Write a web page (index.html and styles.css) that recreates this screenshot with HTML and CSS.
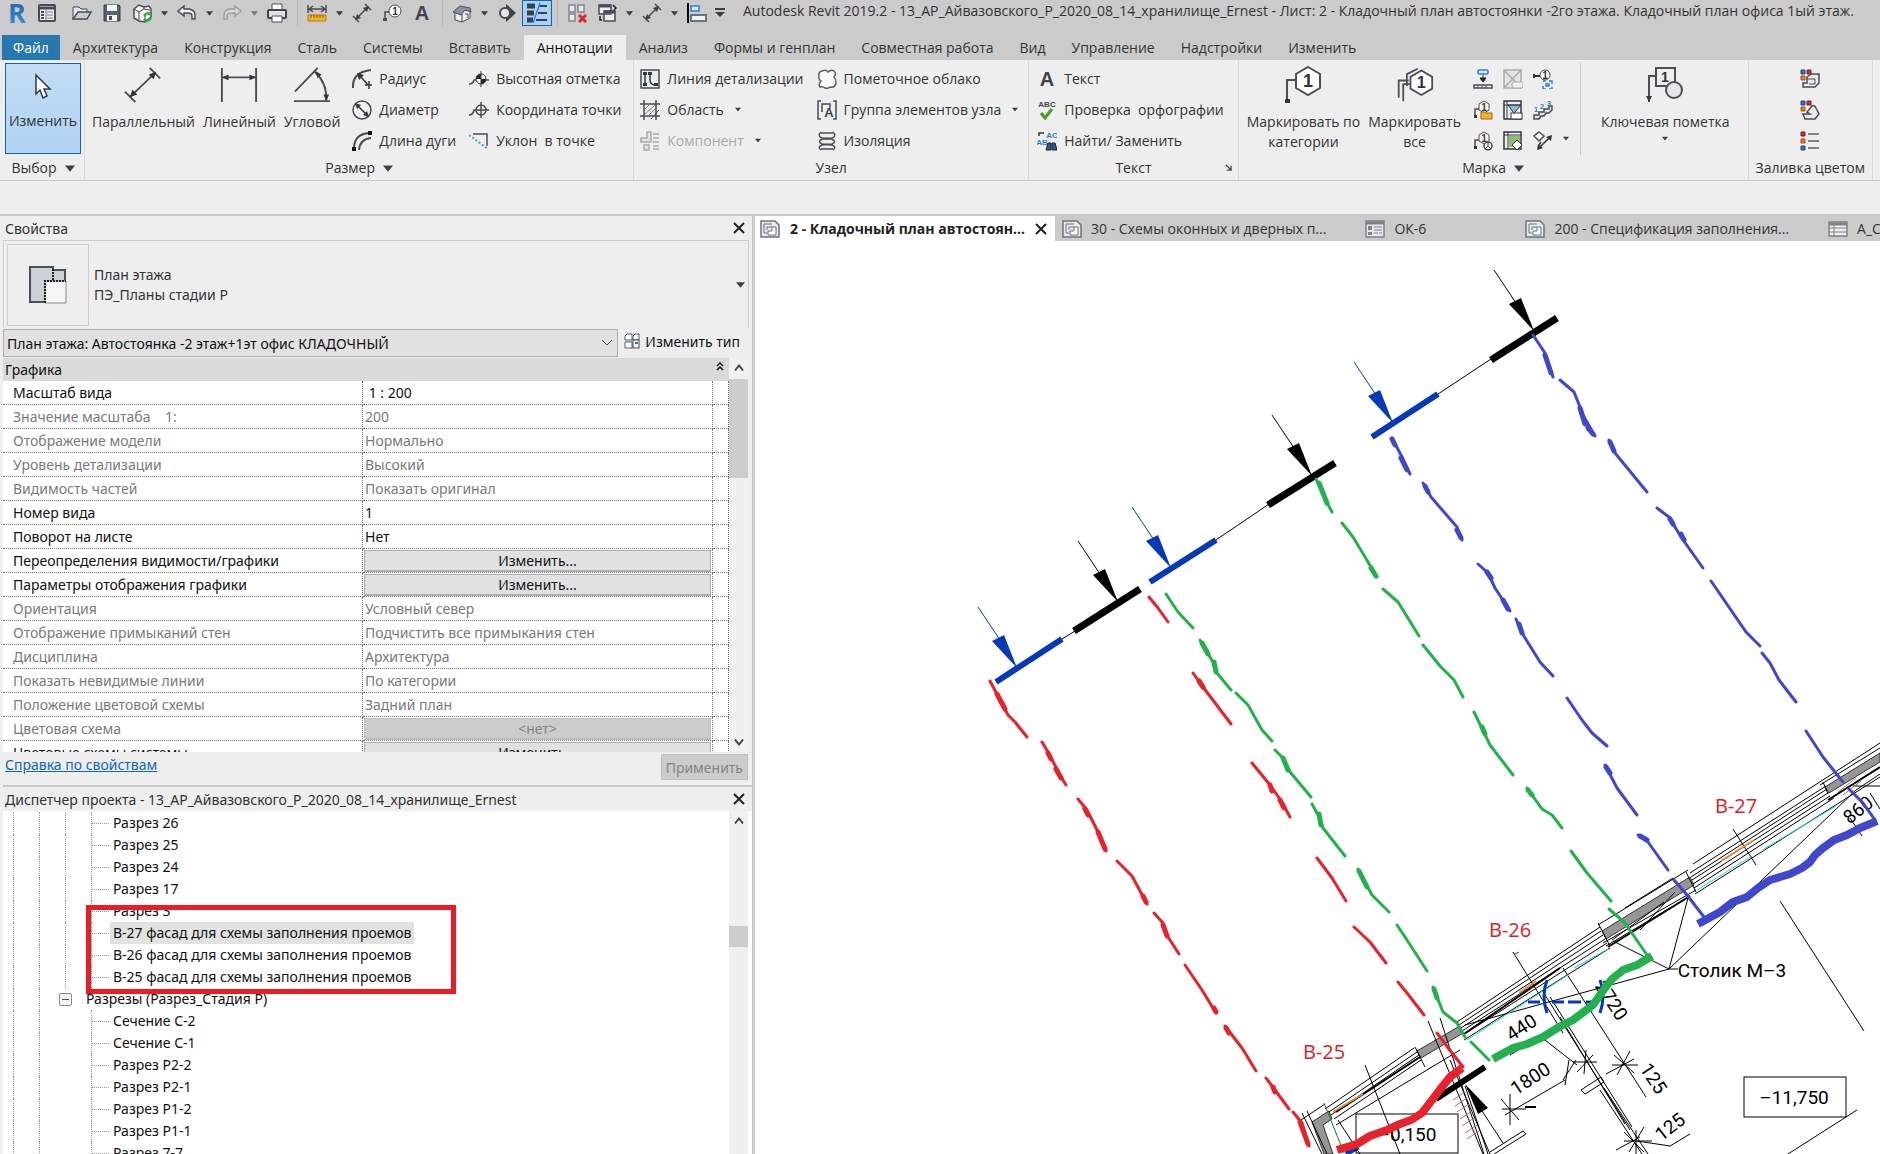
FILE: index.html
```html
<!DOCTYPE html>
<html lang="ru">
<head>
    <meta charset="UTF-8">
    <meta name="viewport" content="width=device-width, initial-scale=1.0">
    <title>Autodesk Revit 2019.2</title>
    <link rel="stylesheet" href="styles.css">
</head>
<body>
    <!-- shared icons -->
    <svg class="sprite" aria-hidden="true">
        <symbol id="i-caret" viewBox="0 0 8 5"><path d="M0 0h8L4 5z" fill="#3c3f45"/></symbol>
        <symbol id="i-close" viewBox="0 0 12 12"><path d="M1 1l10 10M11 1L1 11" stroke="#222" stroke-width="2"/></symbol>
        <symbol id="i-up" viewBox="0 0 10 8"><path d="M1 6.500l4-5 4 5" fill="none" stroke="#444" stroke-width="2"/></symbol>
        <symbol id="i-dblup" viewBox="0 0 8 10"><path d="M1 5l3-3 3 3M1 9l3-3 3 3" fill="none" stroke="#111" stroke-width="1.500"/></symbol>
        <symbol id="i-down" viewBox="0 0 10 8"><path d="M1 1.500l4 5 4-5" fill="none" stroke="#444" stroke-width="2"/></symbol>
        <symbol id="i-window" viewBox="0 0 20 20"><rect x="2" y="2" width="16" height="16" rx="1" fill="#eee" stroke="#474c55" stroke-width="2"/><path d="M2 5h16" stroke="#474c55" stroke-width="3"/><path d="M4 9h3M4 12h3M4 15h3" stroke="#474c55" stroke-width="2"/><path d="M9 7v10M10 9h6M10 12h6M10 15h6" stroke="#777c85"/></symbol>
        <symbol id="i-open" viewBox="0 0 20 20"><path d="M1 16V4h6l2 2h6v3" fill="#e4e6ea" stroke="#474c55"/><path d="M1 16L6 9h13l-4 7z" fill="#c9ced6" stroke="#474c55" stroke-width="1.500"/></symbol>
        <symbol id="i-save" viewBox="0 0 20 20"><path d="M2 2h15l1 1v15H2z" fill="#59606b" stroke="#3a3f48"/><path d="M5 2h10v6H5zM5 12h10v6H5z" fill="#f2f3f5"/><path d="M7 13h3v4H7z" fill="#474c55"/></symbol>
        <symbol id="i-sync" viewBox="0 0 20 20"><path d="M2 6l5-4 5 2 5-1 2 3v8l-6 5-6-1-5-3z" fill="#f4f5f6" stroke="#474c55" stroke-width="1.500"/><path d="M2 6l5 3 5-3 6 1M7 9v8M12 6V3M13 11v6" fill="none" stroke="#474c55"/><path d="M12 13q4-5 7-1M19 15q-4 5-7 1" fill="none" stroke="#1fb13a" stroke-width="2.500"/></symbol>
        <symbol id="i-undo" viewBox="0 0 20 20"><path d="M1 8l6-5v3h5q6 1 6 6v4h-3v-3q0-3-4-3H7v3z" fill="#eee" stroke="#474c55" stroke-width="1.500"/></symbol>
        <symbol id="i-redo" viewBox="0 0 20 20"><path d="M19 8l-6-5v3H8q-6 1-6 6v4h3v-3q0-3 4-3h4v3z" fill="#d8d8d8" stroke="#9c9fa4" stroke-width="1.500"/></symbol>
        <symbol id="i-print" viewBox="0 0 20 20"><path d="M5 1h10v7H5z" fill="#fff" stroke="#474c55"/><rect x="1" y="7" width="18" height="8" rx="1" fill="#dfe2e6" stroke="#3f444d" stroke-width="2"/><path d="M5 13h10v6H5z" fill="#fff" stroke="#474c55"/></symbol>
        <symbol id="i-measure" viewBox="0 0 20 20"><path d="M1 2v8M19 2v8M2 6h16M6 3L2 6l4 3M14 3l4 3-4 3" fill="none" stroke="#474c55" stroke-width="1.500"/><path d="M1 12h18v6H1z" fill="#f2b32c" stroke="#b97a10"/><path d="M4 12v3M7 12v3M10 12v3M13 12v3M16 12v3" stroke="#8a5a08"/></symbol>
        <symbol id="i-dim" viewBox="0 0 20 20"><path d="M4 16L16 4M1 13l6 6M13 1l6 6" stroke="#474c55" stroke-width="1.500"/><path d="M3 17l2-6 4 4zM17 3l-2 6-4-4z" fill="#3c4047"/></symbol>
        <symbol id="i-tag" viewBox="0 0 20 20"><path d="M3 16V9h4" fill="none" stroke="#474c55" stroke-width="1.500"/><path d="M1 15h4v3H1z" fill="#474c55"/><circle cx="13" cy="8" r="6" fill="#fff" stroke="#474c55"/><text x="13" y="12" class="num">1</text></symbol>
        <symbol id="i-letter" viewBox="0 0 20 20"><text x="10" y="17" class="letter">A</text></symbol>
        <symbol id="i-house" viewBox="0 0 20 20"><path d="M3 9v8l7 2 8-4V8" fill="#eceef1" stroke="#474c55"/><path d="M1 9l7-6 10 2 1 4-6-2-4 5z" fill="#8d949f" stroke="#474c55"/><path d="M10 11v8M13 11h3v4" fill="none" stroke="#474c55"/></symbol>
        <symbol id="i-section" viewBox="0 0 20 20"><path d="M9 1l10 9-10 9z" fill="#3c4047"/><circle cx="8" cy="10" r="5" fill="#e9eaec" stroke="#474c55" stroke-width="2"/></symbol>
        <symbol id="i-thin" viewBox="0 0 24 22"><path d="M2 4h8M2 11h7M2 18h6" stroke="#3c4047" stroke-width="5"/><path d="M14 4h8M13 11h9M11 18h11" stroke="#3c4047" stroke-width="2"/><path d="M15 1L8 21" stroke="#2a8ae6" stroke-width="1.500"/></symbol>
        <symbol id="i-closewin" viewBox="0 0 20 20"><path d="M2 2h6v7H2zM11 2h6v7h-6zM2 11h6v7H2z" fill="#e8eaed" stroke="#81868e" stroke-width="1.500"/><path d="M12 12l7 7M19 12l-7 7" stroke="#d92b2b" stroke-width="3"/></symbol>
        <symbol id="i-switch" viewBox="0 0 20 20"><path d="M2 2h12v9H2zM7 8h11v10H7z" fill="#eee" stroke="#474c55" stroke-width="1.500"/><path d="M2 3h12M7 9h11" stroke="#474c55" stroke-width="3"/><path d="M16 2l3 3-2 2M3 13v4h2" fill="none" stroke="#222" stroke-width="1.500"/></symbol>
        <symbol id="i-align" viewBox="0 0 20 20"><path d="M1 0v20" stroke="#000" stroke-width="2"/><path d="M4 3h8v5H4z" fill="#d6ecff" stroke="#2a7fd6" stroke-width="1.500"/><path d="M4 12h15v6H4z" fill="#f2f3f5" stroke="#6d737d" stroke-width="2"/></symbol>
        <symbol id="i-custom" viewBox="0 0 10 10"><path d="M0 1h10" stroke="#3c3f45" stroke-width="2"/><path d="M0 4h10L5 9z" fill="#3c3f45"/></symbol>

        <symbol id="i-cursor" viewBox="0 0 20 28"><path d="M3 2v19l4-4 3 8 4-2-3-7h6z" fill="#fff" stroke="#333841" stroke-width="1.500"/></symbol>
        <symbol id="i-aligned" viewBox="0 0 40 38"><path d="M7 31L33 6M1 26l11 11M27 1l11 11" stroke="#4b4f57" stroke-width="2"/><path d="M6 32l3-8 5 5zM34 5l-3 8-5-5z" fill="#33373e"/></symbol>
        <symbol id="i-linear" viewBox="0 0 40 38"><path d="M2 1v36M38 1v36M3 11h34" stroke="#4b4f57" stroke-width="2"/><path d="M2 11l7-3v6zM38 11l-7-3v6z" fill="#33373e"/></symbol>
        <symbol id="i-angular" viewBox="0 0 40 38"><path d="M2 26L26 1M1 36h38M23 5q13 12 12 30" fill="none" stroke="#4b4f57" stroke-width="2"/><path d="M35 36l-3-7h6zM23 4l7 4-4 4z" fill="#33373e"/></symbol>
        <symbol id="i-radius" viewBox="0 0 20 20"><path d="M1 19Q0 3 19 1" fill="none" stroke="#474c55" stroke-width="2"/><path d="M8 7l9 10M17 12v8M13 16h7" stroke="#33373e" stroke-width="1.500"/><path d="M5 4l7 2-5 5z" fill="#33373e"/></symbol>
        <symbol id="i-diameter" viewBox="0 0 20 20"><circle cx="10" cy="10" r="9" fill="#f1f2f4" stroke="#474c55" stroke-width="1.500"/><path d="M4 4l12 12" stroke="#33373e" stroke-width="1.500"/><path d="M3 3l6 2-4 4zM17 17l-6-2 4-4z" fill="#33373e"/></symbol>
        <symbol id="i-arc" viewBox="0 0 20 20"><path d="M2 16Q3 3 17 2M7 19Q8 8 19 7" fill="none" stroke="#474c55" stroke-width="2"/><path d="M0 16h4v4H0zM16 0h4v4h-4z" fill="#111"/></symbol>
        <symbol id="i-elev" viewBox="0 0 20 20"><path d="M0 15q4 0 5-4h15" fill="none" stroke="#474c55" stroke-width="1.500"/><circle cx="12" cy="10" r="5" fill="#fff" stroke="#33373e"/><path d="M12 5a5 5 0 0 0-5 5h5zM12 15a5 5 0 0 0 5-5h-5z" fill="#222"/><path d="M12 2v16" stroke="#33373e"/></symbol>
        <symbol id="i-coord" viewBox="0 0 20 20"><path d="M0 15q4 0 5-5h15M12 2v16" fill="none" stroke="#474c55" stroke-width="1.500"/><circle cx="12" cy="10" r="5" fill="none" stroke="#474c55" stroke-width="1.500"/></symbol>
        <symbol id="i-slope" viewBox="0 0 20 20"><path d="M4 3h14v12" fill="none" stroke="#474c55" stroke-width="1.500"/><path d="M0 4l19 14" stroke="#4f94dc" stroke-width="2" stroke-dasharray="2 2"/></symbol>
        <symbol id="i-detail" viewBox="0 0 20 20"><rect x="1" y="1" width="18" height="18" fill="#e6e9ee" stroke="#474c55" stroke-width="1.500"/><path d="M5 4v12M10 4v7q0 5 6 5" fill="none" stroke="#33373e" stroke-width="1.500"/><path d="M3 3h4v3H3zM3 14h4v3H3zM8 3h4v3H8zM14 14h4v3h-4z" fill="#33373e"/></symbol>
        <symbol id="i-region" viewBox="0 0 20 20"><path d="M0 4h20M0 16h20M4 0v20M16 0v20" stroke="#474c55" stroke-width="1.500"/><path d="M5 9l4-4M5 14l10-9M9 15l6-6" stroke="#7b8089"/><path d="M19 10l-8 9" stroke="#474c55"/></symbol>
        <symbol id="i-comp" viewBox="0 0 20 20"><path d="M7 1h4v10H1V7h6zM4 14h5v5H4z" fill="#e3e3e3" stroke="#aaa" stroke-width="1.500"/><path d="M13 3h6M13 7h6M13 11h6M13 15h6M13 18h6" stroke="#aaa" stroke-width="1.500"/></symbol>
        <symbol id="i-cloud" viewBox="0 0 20 20"><path d="M5 2Q9 0 11 3q3-3 6-1 3 3 0 6 2 2 2 6-1 5-6 4-2 2-5 1-2-2-5-1-2-2 1-6-3-2-2-5-1-4 3-5z" fill="#f8f8f9" stroke="#5a5f68" stroke-width="1.500"/></symbol>
        <symbol id="i-group" viewBox="0 0 20 20"><path d="M4 1H1v18h3M16 1h3v18h-3M5 12V4h8v4" fill="none" stroke="#474c55" stroke-width="1.500"/><text x="12" y="17" class="letter mid">A</text></symbol>
        <symbol id="i-insul" viewBox="0 0 20 20"><path d="M4 1q-4 4 1 6l10 1q5 3 0 5L5 14q-5 2-1 5M16 1q4 4-1 6L5 8q-5 3 0 5l10 1q5 2 1 5M4 2h12M4 18h12" fill="none" stroke="#474c55" stroke-width="1.500"/></symbol>
        <symbol id="i-spell" viewBox="0 0 20 20"><text x="10" y="7" class="tiny">ABC</text><path d="M4 13l4 5 7-9" fill="none" stroke="#45a21d" stroke-width="3"/></symbol>
        <symbol id="i-find" viewBox="0 0 20 20"><path d="M2 5V2h5" fill="none" stroke="#333" stroke-width="1.500"/><text x="15" y="7" class="tiny blue">AC</text><text x="5" y="14" class="tiny blue">AB</text><path d="M9 19l2-7h3v7zM15 12h3l2 7h-5z" fill="#28598f" stroke="#222"/></symbol>
        <symbol id="i-launch" viewBox="0 0 8 8"><path d="M1 1l5 5M2 7h5V2" fill="none" stroke="#444" stroke-width="1.500"/></symbol>

        <symbol id="i-tagcat" viewBox="0 0 38 38"><path d="M3 36V14h11" fill="none" stroke="#4b4f57" stroke-width="2"/><path d="M1 33h5v4H1z" fill="#33373e"/><path d="M24 1l12 7v14l-12 7-12-7V8z" fill="#fff" stroke="#4b4f57" stroke-width="2"/><text x="24" y="21" class="num big-num">1</text></symbol>
        <symbol id="i-tagall" viewBox="0 0 42 38"><path d="M3 33V14h11M8 37V18h8" fill="none" stroke="#4b4f57" stroke-width="2"/><path d="M12 20V7l12-6" fill="none" stroke="#4b4f57" stroke-width="2"/><path d="M28 3l12 7v13l-12 7-12-7V10z" fill="#fff" stroke="#4b4f57" stroke-width="2"/><text x="28" y="22" class="num big-num">1</text></symbol>
        <symbol id="i-keynote" viewBox="0 0 38 38"><path d="M3 36V10h7M10 2h19v18H10z" fill="none" stroke="#4b4f57" stroke-width="2"/><path d="M0 30h6l-3 6z" fill="#33373e"/><circle cx="28" cy="24" r="8" fill="#e3e7ec" stroke="#4b4f57" stroke-width="2"/><text x="19" y="16" class="num mid-num">1</text></symbol>
        <symbol id="i-m1" viewBox="0 0 20 20"><rect x="5" y="1" width="10" height="4" rx="1" fill="#d6ecff" stroke="#2a7fd6" stroke-width="1.500"/><path d="M10 6v5M7 9l3 4 3-4z" stroke="#222" fill="#222"/><path d="M1 16h18v3H1z" fill="#fff" stroke="#474c55" stroke-width="1.500"/><path d="M5 16v3M9 16v3M13 16v3" stroke="#474c55"/></symbol>
        <symbol id="i-m2" viewBox="0 0 20 20"><path d="M1 1h17v18H1zM1 1l17 18M18 1L1 19" fill="#e4e4e4" stroke="#aaa" stroke-width="1.500"/><rect x="9" y="13" width="11" height="6" rx="2" fill="#eee" stroke="#aaa"/></symbol>
        <symbol id="i-m3" viewBox="0 0 20 20"><path d="M1 7h6M1 5v4" stroke="#333" stroke-width="2"/><circle cx="12" cy="6" r="5" fill="#fff" stroke="#474c55"/><text x="12" y="10" class="num">1</text><path d="M10 12h3M16 12h3v3M19 18v2h-3M13 20h-3v-3M13 15h3v2h-3z" fill="none" stroke="#2a7fd6" stroke-width="1.500"/></symbol>
        <symbol id="i-m4" viewBox="0 0 20 20"><path d="M2 16V9h4" fill="none" stroke="#474c55" stroke-width="1.500"/><path d="M1 15h3v3H1z" fill="#333"/><path d="M11 1l5 3v6l-5 3-5-3V4z" fill="#fff" stroke="#474c55"/><text x="11" y="11" class="num">1</text><path d="M8 12h4l1 1h6v6H8z" fill="#f2b32c" stroke="#9c6508"/></symbol>
        <symbol id="i-m5" viewBox="0 0 20 20"><rect x="1" y="1" width="17" height="18" fill="#eef1f4" stroke="#33373e" stroke-width="1.500"/><path d="M5 5h13l-7 8z" fill="#7fc0d8" stroke="#33373e"/><path d="M4 1v18M1 5h17" stroke="#33373e"/><rect x="8" y="13" width="11" height="6" fill="#fff" stroke="#33373e"/></symbol>
        <symbol id="i-m6" viewBox="0 0 20 20"><path d="M1 19v-4h5v-3h5V9h5V6h3v4l-3 3h-3l-2 3H8l-2 3z" fill="#dfe2e6" stroke="#474c55" stroke-width="1.500"/><text x="3" y="12" class="tiny blue">1</text><text x="9" y="9" class="tiny blue">2</text><text x="16" y="6" class="tiny blue">3</text></symbol>
        <symbol id="i-m7" viewBox="0 0 20 20"><path d="M2 16V9h4" fill="none" stroke="#474c55" stroke-width="1.500"/><path d="M1 15h3v3H1z" fill="#333"/><path d="M11 1l5 3v6l-5 3-5-3V4z" fill="#fff" stroke="#474c55"/><text x="11" y="11" class="num">1</text><circle cx="15" cy="15" r="4" fill="#eee" stroke="#474c55" stroke-width="1.500"/><path d="M15 15v-4M15 15l3 3M15 15l-3 3" stroke="#474c55"/></symbol>
        <symbol id="i-m8" viewBox="0 0 20 20"><rect x="1" y="1" width="17" height="17" fill="#eef1f4" stroke="#33373e" stroke-width="1.500"/><path d="M6 5h11v11H6z" fill="#8dbd6b"/><path d="M5 1v17M1 4h17" stroke="#33373e"/><path d="M14 9l5 5-5 5-5-5z" fill="#fff" stroke="#33373e"/></symbol>
        <symbol id="i-m9" viewBox="0 0 20 20"><path d="M6 1l5 4-5 5-5-5z" fill="#fff" stroke="#474c55" stroke-width="1.500"/><path d="M5 18L18 5M8 11l-2 3" stroke="#33373e" stroke-width="1.500"/><path d="M4 19l1-6 5 4zM19 4l-1 6-5-4z" fill="#33373e"/></symbol>
        <g id="i-squares"><path d="M1 1h4v4H1z" fill="#2873c4" stroke="#1b4f8c"/><path d="M7 1h4v4H7z" fill="#c4283a" stroke="#8c1b28"/><path d="M1 7h4v4H1z" fill="#ef7d10" stroke="#a85205"/></g>
        <symbol id="i-c1" viewBox="0 0 20 20"><path d="M7 8l4-3h8v9l-4 4H3v-4h4z" fill="#e8eaed" stroke="#474c55" stroke-width="1.500"/><path d="M7 10h8v5H9" fill="none" stroke="#474c55"/><use href="#i-squares"/></symbol>
        <symbol id="i-c2" viewBox="0 0 20 20"><path d="M3 14h7l-3-2 5-6q3-1 4 2l3 6-4 5H5z" fill="#e8eaed" stroke="#474c55" stroke-width="1.500"/><use href="#i-squares"/></symbol>
        <symbol id="i-c3" viewBox="0 0 20 20"><path d="M1 1h4v4H1z" fill="#c4283a" stroke="#8c1b28"/><path d="M1 8h4v4H1z" fill="#ef7d10" stroke="#a85205"/><path d="M1 15h4v4H1z" fill="#2873c4" stroke="#1b4f8c"/><path d="M8 3h11M8 10h11M8 17h11" stroke="#5a5f68" stroke-width="1.500"/></symbol>

        <symbol id="i-plan" viewBox="0 0 40 40"><path d="M2 2h23v3h12v16H20v16H2z" fill="#ccd1d9" stroke="#4b4f57" stroke-width="2"/><path d="M17 16h21v22H17z" fill="#f6f7f8" stroke="#888"/><path d="M25 4v12M17 38V16h21" fill="none" stroke="#222" stroke-width="2" stroke-dasharray="2 1"/></symbol>
        <symbol id="i-type" viewBox="0 0 16 16"><path d="M1 3l2-2h5v6H1zM9 3l2-2h4v6H9zM1 9h7v6H1z" fill="#fff" stroke="#4a5a6c"/><rect x="9" y="7" width="6" height="8" fill="#fff" stroke="#3a4552"/><path d="M11 9h3v2h-3z" fill="#2873c4"/></symbol>
        <symbol id="i-sheet" viewBox="0 0 20 18"><path d="M1 1h14l4 4v12H1z" fill="#e6e9ec" stroke="#6d737d" stroke-width="1.500"/><path d="M4 4h8M4 4v9h3M7 7h5M7 7v3" fill="none" stroke="#6d737d"/><path d="M12 7h4v8H8v-4h4z" fill="#fff" stroke="#6d737d"/></symbol>
        <symbol id="i-legend" viewBox="0 0 20 18"><rect x="1" y="1" width="18" height="16" fill="#e6e8ea" stroke="#7d828a" stroke-width="1.500"/><path d="M1 3h18" stroke="#7d828a" stroke-width="3"/><path d="M3 6h4v4H3zM3 12h4v3H3z" fill="#7d828a"/><path d="M9 7h8M9 10h8M9 13h4M14 13h3" stroke="#7d828a"/></symbol>
        <symbol id="i-sched" viewBox="0 0 20 18"><rect x="1" y="2" width="18" height="14" fill="#eceef0" stroke="#7d828a" stroke-width="1.500"/><path d="M1 4h18" stroke="#7d828a" stroke-width="3"/><path d="M1 8h18M1 12h18M6 4v12" stroke="#7d828a"/></symbol>
    </svg>

    <header class="titlebar">
        <div class="quick">
            <button class="q logo-btn" aria-label="Revit">
                <svg viewBox="0 0 24 26">
                    <linearGradient id="logo" x1="0" y1="0" x2="0" y2="1">
                        <stop offset="0" stop-color="#1858a8"/><stop offset="1" stop-color="#3a9bd0"/>
                    </linearGradient>
                    <text x="12" y="23" class="logo">R</text>
                </svg>
            </button>
            <button class="q" aria-label="Главная"><svg><use href="#i-window"/></svg></button>
            <button class="q after-logo" aria-label="Открыть"><svg><use href="#i-open"/></svg></button>
            <button class="q" aria-label="Сохранить"><svg><use href="#i-save"/></svg></button>
            <button class="q" aria-label="Синхронизация"><svg><use href="#i-sync"/></svg></button>
            <button class="q more" aria-label="Еще"><svg><use href="#i-caret"/></svg></button>
            <button class="q" aria-label="Отменить"><svg><use href="#i-undo"/></svg></button>
            <button class="q more" aria-label="Еще"><svg><use href="#i-caret"/></svg></button>
            <button class="q" aria-label="Повторить"><svg><use href="#i-redo"/></svg></button>
            <button class="q more faded" aria-label="Еще"><svg><use href="#i-caret"/></svg></button>
            <button class="q" aria-label="Печать"><svg><use href="#i-print"/></svg></button>
            <span class="sep"></span>
            <button class="q" aria-label="Измерить"><svg><use href="#i-measure"/></svg></button>
            <button class="q more" aria-label="Еще"><svg><use href="#i-caret"/></svg></button>
            <button class="q" aria-label="Параллельный размер"><svg><use href="#i-dim"/></svg></button>
            <button class="q" aria-label="Марка"><svg><use href="#i-tag"/></svg></button>
            <button class="q" aria-label="Текст"><svg><use href="#i-letter"/></svg></button>
            <span class="sep"></span>
            <button class="q" aria-label="3D вид"><svg><use href="#i-house"/></svg></button>
            <button class="q more" aria-label="Еще"><svg><use href="#i-caret"/></svg></button>
            <button class="q" aria-label="Разрез"><svg><use href="#i-section"/></svg></button>
            <button class="q on" aria-label="Тонкие линии"><svg><use href="#i-thin"/></svg></button>
            <span class="sep"></span>
            <button class="q" aria-label="Закрыть неактивные"><svg><use href="#i-closewin"/></svg></button>
            <button class="q" aria-label="Переключить окна"><svg><use href="#i-switch"/></svg></button>
            <button class="q more" aria-label="Еще"><svg><use href="#i-caret"/></svg></button>
            <button class="q" aria-label="Размер"><svg><use href="#i-dim"/></svg></button>
            <button class="q more" aria-label="Еще"><svg><use href="#i-caret"/></svg></button>
            <button class="q" aria-label="Выровнять"><svg><use href="#i-align"/></svg></button>
            <button class="q more custom" aria-label="Настройка панели"><svg><use href="#i-custom"/></svg></button>
        </div>
        <div class="title">Autodesk Revit 2019.2 - 13_АР_Айвазовского_Р_2020_08_14_хранилище_Ernest - Лист: 2 - Кладочный план автостоянки -2го этажа. Кладочный план офиса 1ый этаж.</div>
    </header>

    <nav class="tabs">
        <button class="tab file">Файл</button>
        <button class="tab">Архитектура</button>
        <button class="tab">Конструкция</button>
        <button class="tab">Сталь</button>
        <button class="tab">Системы</button>
        <button class="tab">Вставить</button>
        <button class="tab current">Аннотации</button>
        <button class="tab">Анализ</button>
        <button class="tab">Формы и генплан</button>
        <button class="tab">Совместная работа</button>
        <button class="tab">Вид</button>
        <button class="tab">Управление</button>
        <button class="tab">Надстройки</button>
        <button class="tab">Изменить</button>
    </nav>

    <div class="ribbon">
        <section class="panel p-select">
            <div class="tools">
                <button class="big on"><svg class="ico-cursor"><use href="#i-cursor"/></svg><span>Изменить</span></button>
            </div>
            <h2>Выбор <svg class="down"><use href="#i-caret"/></svg></h2>
        </section>
        <section class="panel p-dim">
            <div class="tools">
                <button class="big"><svg><use href="#i-aligned"/></svg><span>Параллельный</span></button>
                <button class="big"><svg><use href="#i-linear"/></svg><span>Линейный</span></button>
                <button class="big"><svg><use href="#i-angular"/></svg><span>Угловой</span></button>
                <div class="col">
                    <button class="small"><svg><use href="#i-radius"/></svg>Радиус</button>
                    <button class="small"><svg><use href="#i-diameter"/></svg>Диаметр</button>
                    <button class="small"><svg><use href="#i-arc"/></svg>Длина дуги</button>
                </div>
                <div class="col">
                    <button class="small"><svg><use href="#i-elev"/></svg>Высотная отметка</button>
                    <button class="small"><svg><use href="#i-coord"/></svg>Координата точки</button>
                    <button class="small"><svg><use href="#i-slope"/></svg>Уклон&nbsp; в точке</button>
                </div>
            </div>
            <h2>Размер <svg class="down"><use href="#i-caret"/></svg></h2>
        </section>
        <section class="panel p-detail">
            <div class="tools">
                <div class="col">
                    <button class="small"><svg><use href="#i-detail"/></svg>Линия детализации</button>
                    <button class="small"><svg><use href="#i-region"/></svg>Область <svg class="drop"><use href="#i-caret"/></svg></button>
                    <button class="small off"><svg><use href="#i-comp"/></svg>Компонент <svg class="drop"><use href="#i-caret"/></svg></button>
                </div>
                <div class="col">
                    <button class="small"><svg><use href="#i-cloud"/></svg>Пометочное облако</button>
                    <button class="small"><svg><use href="#i-group"/></svg>Группа элементов узла <svg class="drop"><use href="#i-caret"/></svg></button>
                    <button class="small"><svg><use href="#i-insul"/></svg>Изоляция</button>
                </div>
            </div>
            <h2>Узел</h2>
        </section>
        <section class="panel p-text">
            <div class="tools">
                <div class="col">
                    <button class="small"><svg><use href="#i-letter"/></svg>Текст</button>
                    <button class="small"><svg><use href="#i-spell"/></svg>Проверка&nbsp; орфографии</button>
                    <button class="small"><svg><use href="#i-find"/></svg>Найти/ Заменить</button>
                </div>
            </div>
            <h2>Текст<svg class="launch"><use href="#i-launch"/></svg></h2>
        </section>
        <section class="panel p-tag">
            <div class="tools">
                <button class="big"><svg><use href="#i-tagcat"/></svg><span>Маркировать по<br>категории</span></button>
                <button class="big"><svg><use href="#i-tagall"/></svg><span>Маркировать<br>все</span></button>
                <div class="icons">
                    <button class="mini" aria-label="Марка балок"><svg><use href="#i-m1"/></svg></button>
                    <button class="mini" aria-label="Помещение" disabled><svg><use href="#i-m2"/></svg></button>
                    <button class="mini" aria-label="Несколько категорий"><svg><use href="#i-m3"/></svg></button>
                    <button class="mini" aria-label="Марка материала"><svg><use href="#i-m4"/></svg></button>
                    <button class="mini" aria-label="Марка пространства"><svg><use href="#i-m5"/></svg></button>
                    <button class="mini" aria-label="Номер проступи"><svg><use href="#i-m6"/></svg></button>
                    <button class="mini" aria-label="Марка зоны"><svg><use href="#i-m7"/></svg></button>
                    <button class="mini" aria-label="Марка области"><svg><use href="#i-m8"/></svg></button>
                    <button class="mini" aria-label="Армирование"><svg><use href="#i-m9"/></svg></button>
                </div>
                <svg class="drop low"><use href="#i-caret"/></svg>
                <span class="rule"></span>
                <button class="big key"><svg><use href="#i-keynote"/></svg><span>Ключевая пометка</span><svg class="drop"><use href="#i-caret"/></svg></button>
            </div>
            <h2>Марка <svg class="down"><use href="#i-caret"/></svg></h2>
        </section>
        <section class="panel p-fill">
            <div class="tools">
                <div class="col">
                    <button class="small" aria-label="Воздуховоды"><svg><use href="#i-c1"/></svg></button>
                    <button class="small" aria-label="Трубы"><svg><use href="#i-c2"/></svg></button>
                    <button class="small" aria-label="Легенда"><svg><use href="#i-c3"/></svg></button>
                </div>
            </div>
            <h2>Заливка цветом</h2>
        </section>
    </div>
    <div class="options"></div>

    <main class="work">
        <aside class="side">
            <section class="props">
                <div class="bar-head"><h3>Свойства</h3><button aria-label="Закрыть"><svg><use href="#i-close"/></svg></button></div>
                <div class="family">
                    <div class="thumb"><svg><use href="#i-plan"/></svg></div>
                    <p>План этажа<br>ПЭ_Планы стадии Р</p>
                    <svg class="drop"><use href="#i-caret"/></svg>
                </div>
                <div class="instance">
                    <select aria-label="Вид"><option>План этажа: Автостоянка -2 этаж+1эт офис КЛАДОЧНЫЙ</option></select>
                    <button class="edit-type"><svg><use href="#i-type"/></svg>Изменить тип</button>
                </div>
                <div class="grid-wrap">
                    <div class="grid">
                        <div class="group">Графика <svg><use href="#i-dblup"/></svg></div>
                        <table>
                            <tr><td>Масштаб вида</td><td>&nbsp;1 : 200</td><td></td></tr>
                            <tr class="ro"><td>Значение масштаба&nbsp;&nbsp;&nbsp; 1:</td><td>200</td><td></td></tr>
                            <tr class="ro"><td>Отображение модели</td><td>Нормально</td><td></td></tr>
                            <tr class="ro"><td>Уровень детализации</td><td>Высокий</td><td></td></tr>
                            <tr class="ro"><td>Видимость частей</td><td>Показать оригинал</td><td></td></tr>
                            <tr><td>Номер вида</td><td>1</td><td></td></tr>
                            <tr><td>Поворот на листе</td><td>Нет</td><td></td></tr>
                            <tr><td>Переопределения видимости/графики</td><td class="cell-btn"><button>Изменить...</button></td><td></td></tr>
                            <tr><td>Параметры отображения графики</td><td class="cell-btn"><button>Изменить...</button></td><td></td></tr>
                            <tr class="ro"><td>Ориентация</td><td>Условный север</td><td></td></tr>
                            <tr class="ro"><td>Отображение примыканий стен</td><td>Подчистить все примыкания стен</td><td></td></tr>
                            <tr class="ro"><td>Дисциплина</td><td>Архитектура</td><td></td></tr>
                            <tr class="ro"><td>Показать невидимые линии</td><td>По категории</td><td></td></tr>
                            <tr class="ro"><td>Положение цветовой схемы</td><td>Задний план</td><td></td></tr>
                            <tr class="ro"><td>Цветовая схема</td><td class="cell-btn"><button disabled>&lt;нет&gt;</button></td><td></td></tr>
                            <tr><td>Цветовые схемы системы</td><td class="cell-btn"><button>Изменить...</button></td><td></td></tr>
                        </table>
                    </div>
                    <div class="scroll props-scroll"><svg><use href="#i-up"/></svg><span class="knob"></span><svg class="end"><use href="#i-down"/></svg></div>
                </div>
                <div class="foot"><a href="#help">Справка по свойствам</a><button disabled>Применить</button></div>
            </section>

            <section class="browser">
                <div class="bar-head"><h3>Диспетчер проекта - 13_АР_Айвазовского_Р_2020_08_14_хранилище_Ernest</h3><button aria-label="Закрыть"><svg><use href="#i-close"/></svg></button></div>
                <div class="tree-wrap">
                    <ul class="tree">
                        <li><i></i><i></i><i></i><i class="leaf"></i><span>Разрез 26</span></li>
                        <li><i></i><i></i><i></i><i class="leaf"></i><span>Разрез 25</span></li>
                        <li><i></i><i></i><i></i><i class="leaf"></i><span>Разрез 24</span></li>
                        <li><i></i><i></i><i></i><i class="leaf"></i><span>Разрез 17</span></li>
                        <li><i></i><i></i><i></i><i class="leaf"></i><span>Разрез 3</span></li>
                        <li><i></i><i></i><i></i><i class="leaf"></i><span class="sel">В-27 фасад для схемы заполнения проемов</span></li>
                        <li><i></i><i></i><i></i><i class="leaf"></i><span>В-26 фасад для схемы заполнения проемов</span></li>
                        <li><i></i><i></i><i></i><i class="leaf"></i><span>В-25 фасад для схемы заполнения проемов</span></li>
                        <li><i></i><i></i><b></b><span>Разрезы (Разрез_Стадия Р)</span></li>
                        <li><i></i><i></i><i class="none"></i><i class="leaf"></i><span>Сечение С-2</span></li>
                        <li><i></i><i></i><i class="none"></i><i class="leaf"></i><span>Сечение С-1</span></li>
                        <li><i></i><i></i><i class="none"></i><i class="leaf"></i><span>Разрез Р2-2</span></li>
                        <li><i></i><i></i><i class="none"></i><i class="leaf"></i><span>Разрез Р2-1</span></li>
                        <li><i></i><i></i><i class="none"></i><i class="leaf"></i><span>Разрез Р1-2</span></li>
                        <li><i></i><i></i><i class="none"></i><i class="leaf"></i><span>Разрез Р1-1</span></li>
                        <li><i></i><i></i><i class="none"></i><i class="leaf"></i><span>Разрез 7-7</span></li>
                    </ul>
                    <div class="scroll tree-scroll"><svg><use href="#i-up"/></svg><span class="knob"></span></div>
                    <div class="marker"></div>
                </div>
            </section>
        </aside>

        <section class="view">
            <div class="docs">
                <button class="doc current"><svg><use href="#i-sheet"/></svg><span>2 - Кладочный план автостоян...</span><svg class="x"><use href="#i-close"/></svg></button>
                <button class="doc"><svg><use href="#i-sheet"/></svg><span>30 - Схемы оконных и дверных п...</span></button>
                <button class="doc"><svg><use href="#i-legend"/></svg><span>ОК-6</span></button>
                <button class="doc"><svg><use href="#i-sheet"/></svg><span>200 - Спецификация заполнения...</span></button>
                <button class="doc"><svg><use href="#i-sched"/></svg><span>А_С</span></button>
            </div>
            <svg class="canvas" viewBox="755 241 1125 913" preserveAspectRatio="xMinYMin slice">
                <!-- section marks -->
                <g class="thin">
                    <path d="M1062 639l13-8M1216 540l53-36M1438 394l53-35"/>
                </g>
                <g class="mark-blue">
                    <path class="bar" d="M996 682l66-43M1150 582l66-42M1372 437l66-43"/>
                    <path class="thin" d="M978 607l26 39M1132 507l26 39M1354 362l26 39"/>
                    <path class="tip" d="M992 641l12-6 13 33zM1146 541l12-6 13 33zM1368 396l12-6 13 33z"/>
                </g>
                <g class="mark-black">
                    <path class="bar" d="M1074 631l66-42M1268 505l67-42M1491 360l66-42"/>
                    <path class="thin" d="M1078 541l26 39M1272 415l26 39M1494 270l26 39"/>
                    <path class="tip" d="M1093 575l12-6 13 33zM1287 449l12-6 13 33zM1509 304l12-6 13 33z"/>
                </g>

                <!-- walls -->
                <g class="wall">
                    <path d="M1417 1051l41-24 5 6-42 25zM1602 931l88-54 4 8-88 54zM1825 787l55-34v9l-51 31zM1312 1122l17-11 3 8-9 6 10 29h-9z"/>
                </g>
                <g class="thin">
                    <path d="M1329 1112L1417 1052M1331 1115L1419 1055M1334 1119L1421 1060M1325 1109L1414 1048M1336 1125L1460 1050"/>
                    <path d="M1457 1022L1600 927M1459 1025L1601 931M1461 1028L1603 935M1462 1031L1605 939M1463 1035L1607 943M1464 1040L1610 948"/>
                    <path d="M1690 873L1826 786M1691 877L1827 789M1692 880L1828 793M1693 884L1830 796M1694 888L1834 798M1695 894L1880 777M1693 864L1880 743M1820 785L1880 748"/>
                    <path d="M1598 925L1688 870M1603 943L1696 890M1625 908L1673 878M1606 946L1690 896M1640 930l35-38M1612 940l52-38"/>
                    <path d="M1598 923l12 23M1686 872l10 20M1823 782l5 12M1415 1047l10 20M1302 1113l20 41M1307 1111l20 43M1338 1120l22 34M1301 1120l24-16"/>
                    <path d="M1365 1065l35 89M1513 952l50 81M1563 968l83 129M1733 829l23 36M1780 901l84 130M1788 1154l69-44"/>
                    <path d="M1669 969l-56-28M1669 969l19-71M1669 969L1856 790M1669 969l-204 56M1669 969h9M1853 786h27M1856 790l24-16"/>
                    <path d="M1545 995l85 135M1550 997l82 130M1560 1017l65 107M1600 1090l42 64M1604 1088l44 66"/>
                    <path d="M1581 1090l20-13 3 5-19 12zM1505 1115l60-35M1606 1074l28-15M1501 1099l18 21M1510 1094v31M1502 1109h24"/>
                    <path d="M1563 1080l13-20M1569 1060l-4 25M1573 1062h24M1577 1072l16-17M1586 1050l-2 24M1612 1065h26M1617 1075l13-24M1614 1055l20 18"/>
                    <path d="M1624 1141h28M1629 1152l15-25M1624 1132l20 20M1636 1130v24M1637 1141l33 5 20-12M1616 1150l24-13"/>
                    <path d="M1428 1021l55 133M1440 1018l44 136M1450 1060l40 94M1465 1086l23 68M1467 1088l36 55M1490 1152l33-21 3 3-32 20"/>
                    <path d="M1541 1037l36 28M1510 1055l18-11M1850 818l12 18M1870 793l10 16"/>
                </g>
                <path class="heavy" d="M1464 1034L1560 968M1608 947L1690 896M1828 800L1880 767M1336 1112L1420 1057"/>
                <path class="cyan" d="M1467 1040L1568 975M1574 968L1608 949M1697 890L1752 856M1764 849L1836 806"/>
                <path class="orange" d="M1519 993l17-12M1721 861l33-21M1333 1112l30-18"/>
                <path class="hatch" d="M1453 1100l12-8M1455 1106l12-8M1457 1112l12-8M1460 1119l12-8M1462 1126l12-8M1465 1133l12-8M1467 1139l12-8M1838 792l18-14M1843 795l18-14"/>
                <path class="green-thin" d="M1324 1103l20 50M1515 954l4-2"/>
                <g class="dash-blue">
                    <path d="M1528 1002h12M1552 1002h12M1568 1002h13M1586 1002h12"/>
                    <path d="M1547 980q-6 16 0 33M1600 980q6 16 0 33"/>
                </g>
                <path class="black-bar" d="M1436 1099l49-32"/>
                <path class="heavy" d="M1525 1107h11"/>
                <path d="M1465 1084l23 24-10 6z"/>
                <path class="corner-blue" d="M1346 1154l12-7"/>

                <!-- plan labels -->
                <rect class="box" x="1356" y="1114" width="102" height="39"/>
                <rect class="box" x="1744" y="1077" width="102" height="40"/>
                <g class="gost">
                    <text x="1407" y="1141">–0,150</text>
                    <text x="1794" y="1104">–11,750</text>
                    <text x="1732" y="977">Столик М–3</text>
                    <text transform="translate(1525 1033) rotate(-33)">440</text>
                    <text transform="translate(1534 1084) rotate(-33)">1800</text>
                    <text transform="translate(1606 1004) rotate(57)">2720</text>
                    <text transform="translate(1648 1082) rotate(57)">125</text>
                    <text transform="translate(1674 1132) rotate(-38)">125</text>
                    <text transform="translate(1862 815) rotate(-38)">860</text>
                </g>
                <g class="names">
                    <text x="1324" y="1059">В-25</text>
                    <text x="1510" y="937">В-26</text>
                    <text x="1736" y="813">В-27</text>
                </g>

                <!-- hand drawn view lines -->
                <g class="pen red">
                    <path d="M990 681L1001 702 1008 715 1015 722 1027 737M1042 742L1048 752 1060 775 1066 785M1078 799L1087 810 1098 832 1106 851M1117 861L1132 876 1147 904M1154 913L1163 923 1168 937 1179 954M1185 965L1202 990 1216 1013M1225 1026L1242 1048 1256 1071M1266 1078L1275 1090 1289 1109M1293 1112L1302 1123 1309 1146"/>
                    <path d="M1149 597L1158 608 1168 622M1193 673L1203 687 1231 724M1252 763L1270 785 1282 802 1290 817M1317 858L1332 878 1346 901M1354 927L1370 942 1386 963M1398 982L1407 993 1424 1015M1437 1033L1449 1049 1463 1067"/>
                    <path class="wide" d="M997 694l8 15M1048 753l3 6M1056 769l5 9M1085 809l3 6M1098 832l7 17M1143 896l3 6M1163 925l4 11M1214 1008l2 4M1226 1028l3 5M1273 1087l2 5M1300 1122l8 22M1199 681l4 6M1270 785l2 6M1280 800l4 8"/>
                </g>
                <g class="pen green">
                    <path d="M1166 594L1178 612 1193 628M1200 640L1213 662 1217 673 1231 690M1236 693L1248 705 1262 730 1272 741M1275 750L1283 758 1290 772 1311 797M1312 804L1318 815 1323 828 1345 856M1358 869L1372 895 1389 912M1397 925L1407 940 1427 971M1433 987L1443 1012 1457 1023 1465 1037M1471 1042L1489 1060"/>
                    <path d="M1316 479L1323 495 1332 512M1342 523L1353 537 1377 577M1383 589L1398 602 1419 636M1423 645L1440 666 1454 680 1463 697M1474 712L1490 745 1513 775M1527 788L1542 809 1552 815 1562 828M1571 851L1587 873 1611 901M1609 909L1625 923 1647 955"/>
                    <path class="wide" d="M1202 643l6 11M1214 662l2 10M1283 758l5 12M1319 814l2 11M1359 871l8 16M1319 483l8 20M1371 568l5 8M1434 989l3 9M1482 727l3 7M1528 790l4 5"/>
                </g>
                <g class="pen violet">
                    <path d="M1392 438L1402 457 1410 474M1423 483L1431 497 1457 527 1462 540M1478 564L1488 573 1495 588 1510 611M1516 619L1522 633 1540 662 1553 676M1567 698L1582 720 1592 733 1607 746M1605 765L1617 788 1637 815M1638 835L1648 842 1668 870M1674 880L1687 895 1704 917"/>
                    <path d="M1533 335L1545 353 1553 377M1560 380L1574 392 1584 417 1595 436M1609 440L1615 453 1647 492M1657 508L1669 517 1681 537 1703 568M1711 581L1733 613 1746 632 1760 646M1762 653L1770 663 1779 680 1796 702M1806 731L1823 757 1843 782M1849 789L1863 803 1875 820"/>
                    <path class="wide" d="M1392 439l3 6M1401 458l6 12M1457 530l4 8M1425 486l3 6M1487 572l4 6M1503 600l5 9M1519 624l3 9M1606 767l4 6M1640 836l7 4M1545 355l6 18M1580 408l5 16M1588 428l5 6M1610 442l4 9M1670 519l3 5M1681 534l3 6"/>
                </g>
                <path class="brush green" d="M1493 1059L1513 1048 1527 1044 1543 1037 1559 1027 1573 1020 1593 1005 1605 988 1612 979 1623 970 1637 965 1652 956"/>
                <path class="brush violet" d="M1698 924L1720 912 1733 902 1747 897 1758 888 1770 880 1790 874 1802 868 1810 862 1815 855 1823 848 1834 840 1847 835 1860 828 1877 821"/>
                <path class="brush red" d="M1462 1068L1450 1077 1442 1087 1432 1100 1422 1113 1411 1120 1400 1124 1387 1130 1370 1136 1357 1144 1337 1150"/>
            </svg>
        </section>
    </main>
</body>
</html>
```

FILE: styles.css
```css
* {
    box-sizing: border-box;
}

body {
    margin: 0;
    height: 100vh;
    display: flex;
    flex-direction: column;
    overflow: hidden;
    background: #eeeeee;
    color: #333333;
    font-family: "Open Sans", "Noto Sans", sans-serif;
    font-size: 14px;
}

button {
    margin: 0;
    padding: 0;
    border: none;
    background: none;
    color: inherit;
    font: inherit;
    white-space: nowrap;
}

h2, h3, p, ul {
    margin: 0;
    padding: 0;
    font-size: 14px;
    font-weight: normal;
}

svg {
    flex: none;
}

.sprite {
    display: none;
}

/* text inside icons */
.logo {
    font: bold 27px "Open Sans", sans-serif;
    text-anchor: middle;
    fill: url(#logo);
}

.letter {
    font: bold 20px "Liberation Sans", sans-serif;
    text-anchor: middle;
    fill: #3f434b;
}

.letter.mid {
    font-size: 13px;
}

.num {
    font: bold 10px "Liberation Sans", sans-serif;
    text-anchor: middle;
    fill: #333;
}

.mid-num {
    font-size: 14px;
}

.big-num {
    font-size: 18px;
}

.tiny {
    font: bold 8px "Liberation Sans", sans-serif;
    text-anchor: middle;
    fill: #444;
}

.tiny.blue {
    fill: #2a7fd6;
}

/* title bar */
.titlebar {
    display: flex;
    height: 35px;
    background: #cbcbcb;
}

.quick {
    display: flex;
    flex: none;
    height: 26px;
    align-items: center;
    margin-right: 16px;
}

.q {
    display: flex;
    align-items: center;
    justify-content: center;
    width: 30px;
    height: 26px;
}

.q svg {
    width: 20px;
    height: 20px;
}

.logo-btn {
    margin-left: 2px;
}

.logo-btn svg {
    width: 24px;
    height: 26px;
}

.after-logo {
    margin-left: 5px;
}

.q.more {
    width: 15px;
}

.q.more svg {
    width: 7px;
    height: 5px;
}

.q.custom svg {
    width: 10px;
    height: 10px;
}

.q.faded {
    opacity: 0.6;
}

.q.on {
    border: 1px solid #1a62b0;
    background: #a9d1f7;
}

.q.on svg {
    width: 24px;
    height: 22px;
}

.sep {
    width: 10px;
    height: 26px;
    background: linear-gradient(#bababa, #bababa) center / 1px 100% no-repeat;
}

.title {
    flex: 1;
    line-height: 22px;
    white-space: nowrap;
    overflow: hidden;
}

/* ribbon tabs */
.tabs {
    display: flex;
    height: 25px;
    padding-left: 2px;
    background: #cbcbcb;
}

.tab {
    padding: 0 13px;
    line-height: 25px;
}

.tab.file {
    padding: 0 11px;
    background: #2878b0;
    color: #ffffff;
}

.tab.current {
    background: #eeeeee;
    color: #111;
}

/* ribbon */
.ribbon {
    display: flex;
    height: 121px;
    padding-left: 2px;
    border-bottom: 1px solid #c8c8c8;
    overflow: hidden;
}

.options {
    height: 35px;
    border-bottom: 2px solid #c8c8c8;
}

.panel {
    flex: none;
    display: flex;
    flex-direction: column;
    border-right: 1px solid #dadada;
}

.tools {
    display: flex;
    height: 97px;
    padding: 3px 4px 0;
}

.panel h2 {
    position: relative;
    display: flex;
    align-items: center;
    justify-content: center;
    gap: 8px;
    line-height: 24px;
}

.down {
    width: 10px;
    height: 7px;
}

.drop {
    width: 6px;
    height: 5px;
    margin-left: 6px;
}

.launch {
    position: absolute;
    right: 6px;
    top: 8px;
    width: 7px;
    height: 7px;
}

.big {
    display: flex;
    flex-direction: column;
    align-items: center;
    height: 91px;
    padding: 3px 4px 0;
    line-height: 20px;
}

.big svg {
    width: 38px;
    height: 38px;
    margin-bottom: 8px;
}

.big .drop {
    width: 6px;
    height: 5px;
    margin: 4px 0 0;
}

.big.on {
    border: 1px solid #1a62b0;
    background: linear-gradient(#c3dcf5, #afd3f1);
    padding: 5px 2px 0;
}

.big .ico-cursor {
    width: 20px;
    height: 28px;
    margin: 4px 0 10px;
}

.col {
    display: flex;
    flex-direction: column;
}

.small {
    display: flex;
    align-items: center;
    gap: 7px;
    height: 31px;
}

.small svg {
    width: 20px;
    height: 20px;
}

.small .drop {
    width: 6px;
    height: 5px;
    margin-left: 4px;
}

.small.off {
    color: #a9a9a9;
}

.p-select .tools {
    padding: 3px 3px 0;
}

.p-select .big {
    width: 76px;
}

.p-dim .tools {
    padding: 3px 12px 0 3px;
}

.p-dim .col {
    margin-left: 8px;
}

.p-dim .col + .col, .p-detail .col + .col {
    margin-left: 13px;
}

.p-detail .tools {
    padding: 3px 10px 0 6px;
}

.p-text .tools {
    padding: 3px 14px 0 8px;
}

.icons {
    display: grid;
    grid-template-columns: repeat(3, 30px);
    grid-auto-rows: 31px;
    margin-left: 8px;
}

.mini {
    display: flex;
    align-items: center;
}

.mini svg {
    width: 20px;
    height: 20px;
}

.drop.low {
    margin: 73px 11px 0 0;
}

.rule {
    width: 1px;
    height: 92px;
    background: #c8c8c8;
}

.big.key {
    padding: 3px 14px 0 20px;
}

.p-fill .tools {
    justify-content: center;
}

.p-fill h2 {
    padding: 0 7px;
}

/* workspace */
.work {
    flex: 1;
    min-height: 0;
    display: grid;
    grid-template-columns: 2fr 3fr;
}

.side {
    display: flex;
    flex-direction: column;
    min-width: 0;
    min-height: 0;
    padding-left: 3px;
    color: #111;
    font-family: "Noto Sans", sans-serif;
}

.bar-head {
    display: flex;
    justify-content: space-between;
    height: 24px;
    padding: 0 7px 0 2px;
    line-height: 25px;
    color: #333;
}

.bar-head svg {
    width: 12px;
    height: 12px;
}

.family {
    display: flex;
    align-items: center;
    height: 88px;
    padding: 0 3px;
    border: 1px solid #cccccc;
    border-bottom: none;
    margin-right: 3px;
    line-height: 20px;
    color: #333;
}

.family p {
    flex: 1;
    padding-left: 5px;
}

.family .drop {
    width: 9px;
    height: 6px;
}

.thumb {
    display: flex;
    align-items: center;
    justify-content: center;
    width: 82px;
    height: 82px;
    border: 1px solid #cccccc;
}

.thumb svg {
    width: 40px;
    height: 40px;
}

.instance {
    display: flex;
    height: 30px;
    gap: 6px;
}

.instance select {
    flex: 1;
    min-width: 0;
    height: 28px;
    margin-top: 1px;
    padding: 0 3px;
    border: 1px solid #adadad;
    background: #e1e1e1 url("data:image/svg+xml,%3Csvg xmlns='http://www.w3.org/2000/svg' width='10' height='6'%3E%3Cpath d='M0 0l5 5 5-5' fill='none' stroke='%23444'/%3E%3C/svg%3E") right 5px center no-repeat;
    appearance: none;
    font: inherit;
    color: #111;
}

.edit-type {
    display: flex;
    align-items: center;
    gap: 5px;
    padding-right: 12px;
    height: 26px;
}

.edit-type svg {
    width: 16px;
    height: 16px;
}

.grid-wrap {
    display: flex;
    height: 394px;
    overflow: hidden;
}

.grid {
    flex: 1;
    background: #ffffff;
}

.group {
    display: flex;
    justify-content: space-between;
    height: 23px;
    padding: 0 5px 0 2px;
    background: #dadada;
    line-height: 24px;
}

.group svg {
    width: 8px;
    height: 10px;
    margin-top: 3px;
}

.grid table {
    width: 100%;
    table-layout: fixed;
    border-collapse: separate;
    border-spacing: 0;
}

.grid td {
    height: 24px;
    padding: 0 0 0 2px;
    border-right: 1px dotted #777;
    border-bottom: 1px dotted #777;
    line-height: 23px;
    white-space: nowrap;
}

.grid td:first-child {
    width: 360px;
    padding-left: 10px;
}

.grid td:last-child {
    width: 16px;
    padding: 0;
}

.ro {
    color: #7a7a7a;
}

.grid .cell-btn {
    padding: 1px 1px 0;
}

.cell-btn button {
    display: block;
    width: 100%;
    height: 22px;
    border: 1px solid #adadad;
    border-bottom-width: 2px;
    background: #e1e1e1;
    line-height: 19px;
    color: #111;
}

.cell-btn button:disabled {
    background: #cccccc;
    border-color: #bfbfbf;
    color: #838383;
}

.scroll {
    display: flex;
    flex-direction: column;
    align-items: center;
    width: 19px;
    padding: 6px 0;
    margin-right: 4px;
    background: #f0f0f0;
}

.scroll svg {
    width: 10px;
    height: 8px;
}

.scroll .knob {
    width: 100%;
    background: #cdcdcd;
}

.scroll .end {
    margin-top: auto;
}

.props-scroll .knob {
    height: 99px;
    margin-top: 7px;
}

.foot {
    display: flex;
    justify-content: space-between;
    height: 35px;
    padding: 2px 4px 0 2px;
    border-bottom: 2px solid #c8c8c8;
}

.foot a {
    line-height: 22px;
    color: #1464b4;
}

.foot button {
    height: 26px;
    padding: 0 4px;
    border: 1px solid #bfbfbf;
    background: #cccccc;
    color: #838383;
}

.browser {
    flex: 1;
    min-height: 0;
    display: flex;
    flex-direction: column;
}

.tree-wrap {
    position: relative;
    flex: 1;
    min-height: 0;
    display: flex;
    overflow: hidden;
    background: #ffffff;
}

.tree {
    flex: 1;
    padding-top: 1px;
    list-style: none;
}

.tree li {
    display: flex;
    height: 22px;
    padding-left: 10px;
    line-height: 22px;
    white-space: nowrap;
}

.tree i {
    width: 26px;
    border-left: 1px dotted #999;
}

.tree .none {
    border-color: transparent;
}

.tree .leaf {
    width: 19px;
    background: repeating-linear-gradient(90deg, #999 0 1px, transparent 1px 2px) 0 11px / 100% 1px no-repeat;
}

/* collapse box of an open branch */
.tree b {
    width: 13px;
    height: 13px;
    margin: 5px 11px 0 -6px;
    border: 1px solid #8a8a8a;
    border-radius: 2px;
    background: linear-gradient(#3b4a7a, #3b4a7a) center / 7px 1px no-repeat #f4f4f4;
}

.tree span {
    padding: 0 3px;
}

.tree .sel {
    background: #e2e2e2;
}

.tree-scroll .knob {
    height: 21px;
    margin-top: 101px;
}

/* red frame round the three facades */
.marker {
    position: absolute;
    left: 83px;
    top: 94px;
    width: 370px;
    height: 89px;
    border: 5px solid #ed1c24;
}

/* drawing area */
.view {
    display: flex;
    flex-direction: column;
    min-width: 0;
    min-height: 0;
    border-left: 3px solid #cbcbcb;
    background: #ffffff;
}

.docs {
    display: flex;
    height: 25px;
    overflow: hidden;
    background: #cbcbcb;
}

.doc {
    flex: none;
    display: flex;
    align-items: center;
    gap: 9px;
    min-width: 160px;
    padding: 0 32px 0 7px;
}

.doc svg {
    width: 20px;
    height: 18px;
}

.doc .x {
    width: 12px;
    height: 12px;
}

.doc.current {
    gap: 10px;
    padding: 0 8px 0 5px;
    background: #ffffff;
    font-weight: bold;
    color: #222;
}

.canvas {
    flex: 1;
    min-height: 0;
    width: 100%;
}

.thin {
    fill: none;
    stroke: #000;
    stroke-width: 1;
}

.heavy {
    stroke: #000;
    stroke-width: 2;
}

.bar {
    stroke-width: 6;
}

.mark-blue {
    fill: #0439b8;
    stroke: #0439b8;
}

.mark-blue .thin {
    stroke: #0439b8;
}

.mark-black {
    stroke: #000;
}

.mark-black .bar {
    stroke-width: 7;
}

.tip {
    stroke: none;
}

.wall {
    fill: #969696;
    stroke: #333;
}

.cyan {
    stroke: #19d3e0;
}

.orange {
    stroke: #e08a3c;
    stroke-width: 2;
}

.hatch {
    stroke: #b06a6a;
}

.green-thin {
    stroke: #167a2a;
}

.dash-blue {
    fill: none;
    stroke: #0439b8;
    stroke-width: 3;
}

.black-bar {
    stroke: #000;
    stroke-width: 6;
}

.corner-blue {
    stroke: #0439b8;
    stroke-width: 5;
}

.box {
    fill: none;
    stroke: #000;
}

.gost text {
    font: 19px "Liberation Sans Narrow", "Roboto", sans-serif;
    text-anchor: middle;
}

.names text {
    font: 20px "Open Sans", sans-serif;
    text-anchor: middle;
    fill: #dc2026;
}

.pen {
    fill: none;
    stroke-width: 3;
    stroke-linecap: round;
    stroke-linejoin: round;
}

.pen .wide {
    stroke-width: 5;
}

.brush {
    fill: none;
    stroke-width: 8;
    stroke-linejoin: round;
}

.red {
    stroke: #e8222a;
}

.green {
    stroke: #23b14d;
}

.violet {
    stroke: #3f48cc;
}
```
